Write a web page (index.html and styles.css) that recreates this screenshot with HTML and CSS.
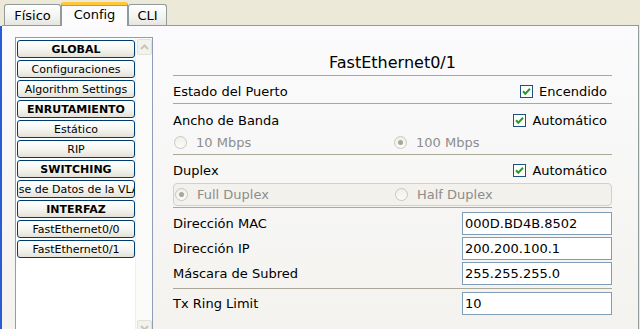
FILE: index.html
```html
<!DOCTYPE html>
<html lang="es">
<head>
<meta charset="utf-8">
<title>Config</title>
<link rel="stylesheet" href="styles.css">
</head>
<body>
<div class="app">
  <div class="tabbar">
    <div class="tab tab-fisico">Físico</div>
    <div class="tab tab-config active">Config</div>
    <div class="tab tab-cli">CLI</div>
  </div>
  <div class="pane">
    <div class="sidebar">
      <div class="list">
        <div class="btn hdr">GLOBAL</div>
        <div class="btn">Configuraciones</div>
        <div class="btn">Algorithm Settings</div>
        <div class="btn hdr">ENRUTAMIENTO</div>
        <div class="btn">Estático</div>
        <div class="btn">RIP</div>
        <div class="btn hdr">SWITCHING</div>
        <div class="btn">Base de Datos de la VLAN</div>
        <div class="btn hdr">INTERFAZ</div>
        <div class="btn">FastEthernet0/0</div>
        <div class="btn">FastEthernet0/1</div>
      </div>
      <div class="scroll">
        <div class="sbtn"><svg width="9" height="6" viewBox="0 0 9 6"><path d="M1 5 L4.5 1.5 L8 5" fill="none" stroke="#c8c6bb" stroke-width="2"/></svg></div>
        <div class="track"></div>
        <div class="sbtn"><svg width="9" height="6" viewBox="0 0 9 6"><path d="M1 1 L4.5 4.5 L8 1" fill="none" stroke="#c8c6bb" stroke-width="2"/></svg></div>
      </div>
    </div>
    <div class="content">
      <div class="title">FastEthernet0/1</div>
      <div class="sec sec-port">
        <div class="row">
          <span>Estado del Puerto</span>
          <span class="chk"><svg class="box" width="13" height="13" viewBox="0 0 13 13"><rect x="0.5" y="0.5" width="12" height="12" fill="#fff" stroke="#1c5180"/><path d="M3 6.3 L5.3 8.8 L10 3.8" fill="none" stroke="#21a121" stroke-width="2"/></svg>Encendido</span>
        </div>
      </div>
      <div class="sec sec-bw">
        <div class="row row-bw">
          <span>Ancho de Banda</span>
          <span class="chk"><svg class="box" width="13" height="13" viewBox="0 0 13 13"><rect x="0.5" y="0.5" width="12" height="12" fill="#fff" stroke="#1c5180"/><path d="M3 6.3 L5.3 8.8 L10 3.8" fill="none" stroke="#21a121" stroke-width="2"/></svg>Automático</span>
        </div>
        <div class="radios">
          <span class="radio"><span class="dot"></span>10 Mbps</span>
          <span class="radio"><span class="dot on"></span>100 Mbps</span>
        </div>
      </div>
      <div class="sec sec-dup">
        <div class="row row-dup">
          <span>Duplex</span>
          <span class="chk"><svg class="box" width="13" height="13" viewBox="0 0 13 13"><rect x="0.5" y="0.5" width="12" height="12" fill="#fff" stroke="#1c5180"/><path d="M3 6.3 L5.3 8.8 L10 3.8" fill="none" stroke="#21a121" stroke-width="2"/></svg>Automático</span>
        </div>
        <div class="radios group">
          <span class="radio"><span class="dot on"></span>Full Duplex</span>
          <span class="radio"><span class="dot"></span>Half Duplex</span>
        </div>
      </div>
      <div class="sec sec-addr">
        <div class="field"><span>Dirección MAC</span><span class="input">000D.BD4B.8502</span></div>
        <div class="field"><span>Dirección IP</span><span class="input">200.200.100.1</span></div>
        <div class="field"><span>Máscara de Subred</span><span class="input">255.255.255.0</span></div>
      </div>
      <div class="sec-tx">
        <div class="field"><span>Tx Ring Limit</span><span class="input">10</span></div>
      </div>
    </div>
  </div>
</div>
</body>
</html>
```

FILE: styles.css
```css
* { box-sizing: border-box; }
html, body { margin: 0; padding: 0; }
body {
  width: 640px;
  height: 329px;
  overflow: hidden;
  background: #ece9d8;
  font-family: "DejaVu Sans", Verdana, sans-serif;
  color: #000;
}
.app {
  width: 640px;
  height: 329px;
  overflow: hidden;
  display: flex;
  flex-direction: column;
}
.tabbar {
  height: 26px;
  flex: none;
  display: flex;
  align-items: flex-end;
  padding-left: 4px;
  border-bottom: 1px solid #919b9c;
  margin-right: 1px;
  margin-left: 2px;
}
.tab {
  height: 21px;
  border: 1px solid #919b9c;
  border-bottom: none;
  border-radius: 3px 3px 0 0;
  background: linear-gradient(#ffffff, #f3f3ef 60%, #e6e5df);
  font-size: 13px;
  display: flex;
  justify-content: center;
  align-items: center;
  padding-top: 1px;
}
.tab-fisico { width: 57px; margin-left: -2px; }
.tab-config { width: 67px; }
.tab-cli { width: 39px; margin-left: 0; }
.tab.active {
  height: 24px;
  margin-bottom: -1px;
  background: #fcfcfe;
  border-top: 3px solid #ffc83c;
  box-shadow: inset 0 1px 0 #e68b2c;
  align-items: flex-start;
  padding-top: 2px;
}
.pane {
  flex: 1;
  display: flex;
  border-left: 2px solid #2a5bd7;
  border-right: 1px solid #919b9c;
  margin-right: 1px;
  background: linear-gradient(#fbfbfd, #f3f2ee);
  padding: 11px 0 0 13px;
}
.sidebar {
  width: 138px;
  height: 301px;
  flex: none;
  display: flex;
  border: 1px solid #8f9eb5;
  background: #fff;
}
.list {
  width: 119px;
  padding: 2px 0 0 1px;
  display: flex;
  flex-direction: column;
  gap: 2px;
}
.btn {
  height: 18px;
  width: 118px;
  border: 1px solid #003c74;
  border-radius: 3px;
  background: linear-gradient(#ffffff, #f4f4f0 55%, #e3e1d8);
  font-size: 11px;
  display: flex;
  justify-content: center;
  align-items: center;
  white-space: nowrap;
  overflow: hidden;
}
.btn.hdr { font-weight: bold; }
.scroll {
  width: 17px;
  display: flex;
  flex-direction: column;
  background: #fbfbf9;
  border-left: 1px solid #f0efe8;
  padding: 1px;
}
.sbtn {
  height: 16px;
  width: 15px;
  border: 1px solid #e2e1d9;
  border-radius: 2px;
  background: #f3f3ee;
  display: flex;
  justify-content: center;
  align-items: center;
}
.track { flex: 1; }
.content {
  width: 439px;
  margin-left: 20px;
  padding-top: 15px;
  font-size: 13px;
}
.title {
  height: 24px;
  line-height: 22px;
  text-align: center;
  font-size: 16px;
  border-bottom: 1px solid #aca899;
}
.sec { border-bottom: 1px solid #aca899; }
.row {
  display: flex;
  justify-content: space-between;
  align-items: center;
}
.sec-port { height: 28px; padding-top: 3px; }
.sec-port .row { height: 24px; }
.sec-bw { height: 51px; padding-top: 3px; }
.row-bw { height: 26px; }
.sec-dup { height: 53px; padding-top: 3px; }
.row-dup { height: 25px; }
.chk {
  display: flex;
  align-items: center;
  gap: 6px;
  padding-right: 5px;
}
.box { display: block; flex: none; }
.radios {
  display: grid;
  grid-template-columns: 220px 1fr;
  height: 19px;
  align-items: center;
  color: #8d8d8d;
}
.radio {
  display: flex;
  align-items: center;
  gap: 9px;
  padding-left: 1px;
}
.dot {
  width: 13px;
  height: 13px;
  border-radius: 50%;
  border: 1px solid #cac8bb;
  background: linear-gradient(#f0efe9, #fbfbf8);
  display: flex;
  justify-content: center;
  align-items: center;
}
.dot.on::after {
  content: "";
  width: 5px;
  height: 5px;
  border-radius: 50%;
  background: #a8a79e;
}
.group {
  height: 23px;
  border: 1px solid #d3d1c4;
  border-radius: 4px;
  background: #f2f1ec;
}
.sec-addr {
  height: 81px;
  padding-top: 4px;
  display: flex;
  flex-direction: column;
  gap: 2px;
}
.sec-tx { padding-top: 3px; }
.field {
  height: 23px;
  display: flex;
  justify-content: space-between;
  align-items: center;
}
.input {
  width: 150px;
  height: 23px;
  border: 1px solid #7f9db9;
  background: #fff;
  padding-left: 2px;
  display: flex;
  align-items: center;
  font-size: 13px;
}
```
